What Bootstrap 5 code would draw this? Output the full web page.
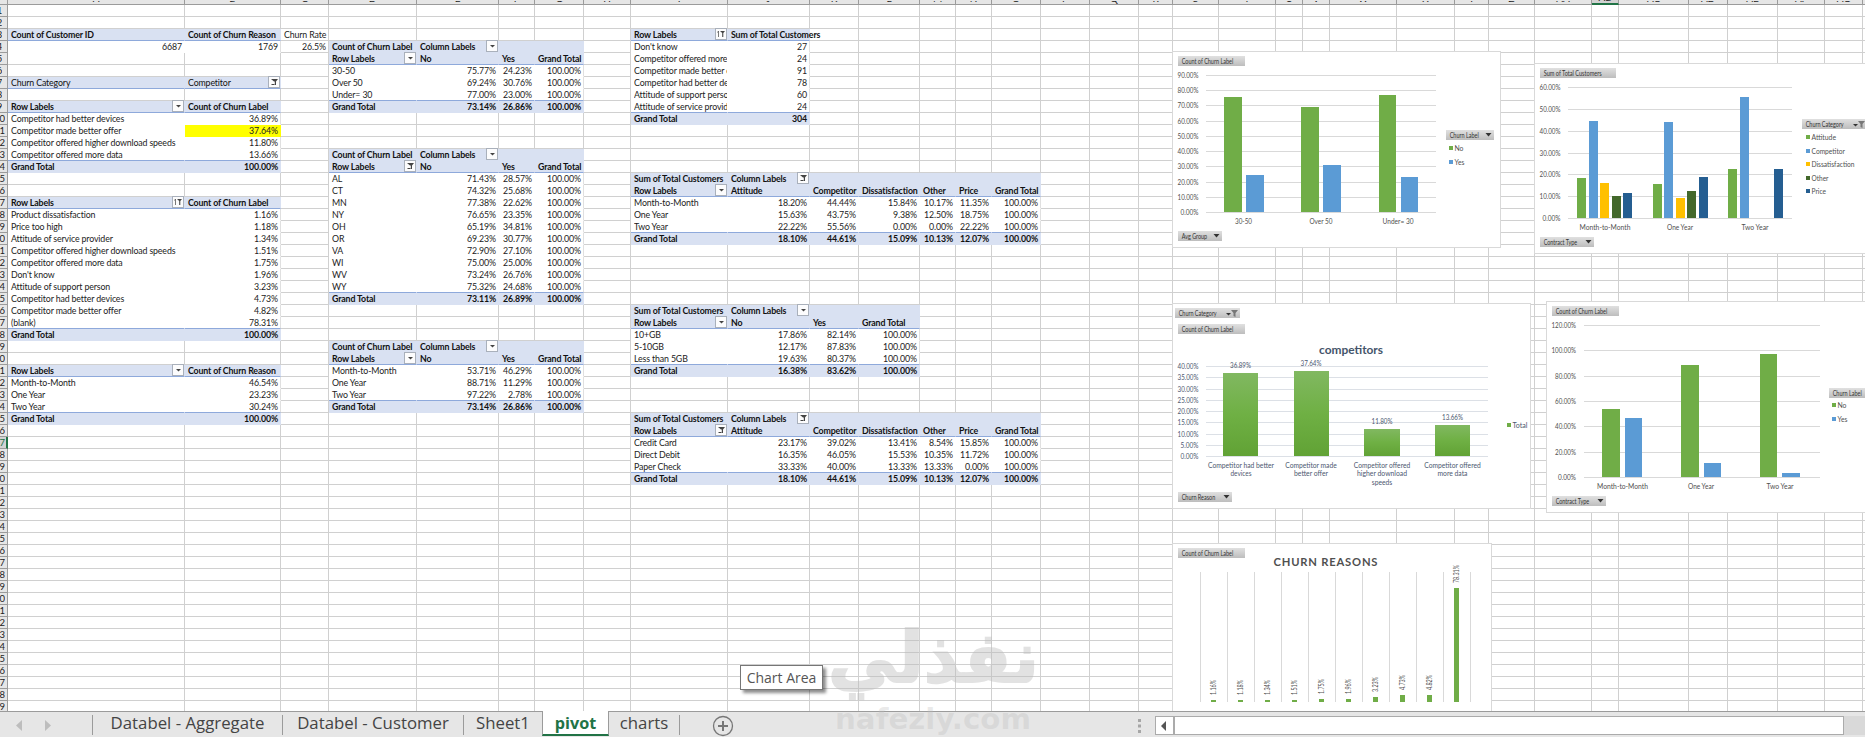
<!DOCTYPE html>
<html lang="en">
<head>
    <meta charset="UTF-8">
    <meta name="viewport" content="width=device-width, initial-scale=1.0">
    <title>Churn workbook</title>
    <link rel="stylesheet" href="https://cdn.jsdelivr.net/npm/bootstrap@5.3.0/dist/css/bootstrap.min.css">
    <style>
        body { width: 1865px; height: 737px; font-family: Lato, "Liberation Sans", sans-serif; color: #222; }
        .sheet-area { height: 711px; }

        .grid { width: 1906px; table-layout: fixed; border-collapse: separate; border-spacing: 0; font-size: 8.8px; line-height: 11px; letter-spacing: -.14px; }
        .grid td, .grid th { height: 12px; padding: 0 2px 0 3px; border-right: 1px solid #d0d0d0; border-bottom: 1px solid #d0d0d0; white-space: nowrap; position: relative; font-weight: 400; }
        .grid td > span, .grid td.clip > div { position: relative; top: -.4px; }
        .grid .col-head th { height: 4px; padding: 0; background: #e6e6e6; border-color: #9b9b9b; }
        .col-head div { height: 3px; line-height: 3px; font-size: 10px; overflow: hidden; text-align: center; }
        .col-head div span { position: relative; top: -4px; }
        .grid .col-head .active { background: #d2d2d2; border-bottom: 2px solid #217346; }
        .grid .row-head { padding: 0; background: #e6e6e6; border-color: #9b9b9b; font-size: 9.5px; }
        .row-head div { width: 5px; height: 11px; overflow: hidden; display: flex; justify-content: flex-end; }
        .row-head.single div { width: 2px; }
        .grid .row-head.active { color: #217346; border-right: 2px solid #217346; background: #d2d2d2; }

        .grid .blue { background: #d9e1f2; border-color: #d9e1f2; color: #111; }
        .grid .bold { font-weight: 700; }
        .grid .plain { background: #fff; border-color: #fff; }
        .grid .edge { border-right-color: #e0e0e0; }
        .grid .rule { border-bottom-color: #8ea9db; }
        .grid .hot { background: #ff0; border-color: #ff0; }
        .grid .num { text-align: right; letter-spacing: -.1px; }
        .grid .clip { padding-right: 0; }
        .grid .clip > div { overflow: hidden; height: 11px; }
        .drop { position: absolute; right: 0; top: 0; width: 12px; height: 12px; margin-top: -1px; }

        .chart-layer { position: absolute; left: 0; top: 0; }
        .chart-layer text { font-size: 7.2px; fill: #505050; }
        .chart-layer .chart3 text { fill: #4c5870; }
        .chart-layer text.btn-text { fill: #333; }

        .tip { position: absolute; left: 740px; top: 665px; width: 83px; height: 25px; border: 1px solid #767676; background: #fff; color: #555; font: 14px/24px "Open Sans", sans-serif; box-shadow: 3px 3px 3px rgba(0,0,0,.45); text-align: center; }
        .mark-layer { position: absolute; left: 820px; top: 605px; pointer-events: none; }

        .tab-bar { height: 26px; background: #e6e6e6; border-top: 1px solid #9b9b9b; font: 16.8px/17px "Open Sans", sans-serif; color: #444; }
        .sheet-tab { height: 20px; margin-top: 3px; border-right: 1px solid #9b9b9b; text-align: center; line-height: 16px; white-space: nowrap; }
        .sheet-tab.current { height: 25px; margin-top: -1px; padding-top: 4px; background: #fff; color: #217346; font-weight: 700; font-size: 16.2px; border-right: 1px solid #9b9b9b; border-left: 1px solid #9b9b9b; border-bottom: 2px solid #217346; }
        .scroll-btn, .scroll-thumb { height: 19px; background: #fff; border: 1px solid #ababab; }
        .scroll-track { height: 19px; background: #d9d9d9; }
    </style>
</head>
<body class="overflow-hidden bg-white">
    <div class="d-flex flex-column">
        <main class="sheet-area position-relative overflow-hidden">
            <table class="grid" id="grid"></table>
            <svg class="chart-layer" id="charts" width="1865" height="711"></svg>
        </main>

        <footer class="tab-bar d-flex">
            <svg width="92" height="25">
                <path d="M22 8v11l-6-5.500zM45 8v11l6-5.500z" fill="#bdbdbd"/>
            </svg>
            <div class="sheet-tab" style="width:1px"></div>
            <div class="sheet-tab" style="width:190px">Databel - Aggregate</div>
            <div class="sheet-tab" style="width:181px">Databel - Customer</div>
            <div class="sheet-tab border-0" style="width:78px">Sheet1</div>
            <div class="sheet-tab current" style="width:67px">pivot</div>
            <div class="sheet-tab" style="width:71px">charts</div>
            <svg width="462" height="25">
                <circle cx="43" cy="14" r="9.500" fill="none" stroke="#777" stroke-width="1.300"/>
                <path d="M38 14h10M43 9v10" stroke="#777" stroke-width="2"/>
                <path d="M458 7h3v3h-3zM458 12.500h3v3h-3zM458 18h3v3h-3z" fill="#a6a6a6"/>
            </svg>
            <div class="flex-grow-1 d-flex pt-1" style="padding-left:13px">
                <div class="scroll-btn" style="width:19px"><svg width="17" height="17" class="d-block"><path d="M10 4v10l-5-5z" fill="#555"/></svg></div>
                <div class="scroll-thumb" style="width:670px"></div>
                <div class="scroll-track flex-grow-1"></div>
            </div>
        </footer>
    </div>

    <div class="tip">Chart Area</div>
    <svg class="mark-layer" width="230" height="132" fill="#bcbcbc">
        <g opacity=".42">
            <text x="219" y="77" direction="rtl" font-family="DejaVu Sans" font-weight="700" font-size="71" textLength="211" lengthAdjust="spacingAndGlyphs" stroke="#bcbcbc" stroke-width="2">نفذلي</text>
        </g>
        <text x="15" y="124" font-family="DejaVu Sans" font-weight="700" font-size="29" textLength="196" lengthAdjust="spacingAndGlyphs" fill-opacity=".33">nafezly.com</text>
    </svg>

    <script src="https://cdn.jsdelivr.net/npm/bootstrap@5.3.0/dist/js/bootstrap.bundle.min.js"></script>
    <script>
        const edges = [7, 184, 280, 328, 416, 498, 534, 583, 630, 727, 809, 858, 919, 955, 991, 1040, 1089, 1138, 1172, 1218, 1275, 1302, 1329, 1396, 1454, 1488, 1534, 1591, 1618, 1688, 1727, 1777, 1824, 1862, 1905];
        const rowCount = 59;
        const cells = {};

        const reasonRows = [['Product dissatisfaction', '1.16%'], ['Price too high', '1.18%'], ['Attitude of service provider', '1.34%'], ['Competitor offered higher download speeds', '1.51%'], ['Competitor offered more data', '1.75%'], ["Don't know", '1.96%'], ['Attitude of support person', '3.23%'], ['Competitor had better devices', '4.73%'], ['Competitor made better offer', '4.82%'], ['(blank)', '78.31%']];
        const h = '100.00%';
        const churnHead = drop => [['Count of Churn Label', 'Column Labels|down', '', ''], ['Row Labels|' + drop, 'No', 'Yes', 'Grand Total']];
        const typeHead = drop => [['Sum of Total Customers', 'Column Labels|filter', '', '', '', '', ''], ['Row Labels|' + drop, 'Attitude', 'Competitor', 'Dissatisfaction', 'Other', 'Price', 'Grand Total']];

        const pivots = [
            { col: 0, row: 3, head: [['Count of Customer ID', 'Count of Churn Reason']], body: [['#6687', '1769']] },
            { col: 0, row: 9, head: [['Row Labels|down', 'Count of Churn Label']], body: [['Competitor had better devices', '36.89%'], ['Competitor made better offer', '37.64%'], ['Competitor offered higher download speeds', '11.80%'], ['Competitor offered more data', '13.66%']], total: ['Grand Total', h] },
            { col: 0, row: 17, head: [['Row Labels|sort', 'Count of Churn Label']], body: reasonRows, total: ['Grand Total', h] },
            { col: 0, row: 31, head: [['Row Labels|down', 'Count of Churn Reason']], body: [['Month-to-Month', '46.54%'], ['One Year', '23.23%'], ['Two Year', '30.24%']], total: ['Grand Total', h] },
            { col: 3, row: 4, head: churnHead('down'), body: [['30-50', '75.77%', '24.23%', h], ['Over 50', '69.24%', '30.76%', h], ['Under= 30', '77.00%', '23.00%', h]], total: ['Grand Total', '73.14%', '26.86%', h] },
            { col: 3, row: 13, head: churnHead('filter'), body: [['AL', '71.43%', '28.57%', h], ['CT', '74.32%', '25.68%', h], ['MN', '77.38%', '22.62%', h], ['NY', '76.65%', '23.35%', h], ['OH', '65.19%', '34.81%', h], ['OR', '69.23%', '30.77%', h], ['VA', '72.90%', '27.10%', h], ['WI', '75.00%', '25.00%', h], ['WV', '73.24%', '26.76%', h], ['WY', '75.32%', '24.68%', h]], total: ['Grand Total', '73.11%', '26.89%', h] },
            { col: 3, row: 29, head: churnHead('down'), body: [['Month-to-Month', '53.71%', '46.29%', h], ['One Year', '88.71%', '11.29%', h], ['Two Year', '97.22%', '2.78%', h]], total: ['Grand Total', '73.14%', '26.86%', h] },
            { col: 8, row: 3, head: [['Row Labels|sort', 'Sum of Total Customers']], body: [["Don't know", '27'], ['Competitor offered more', '24'], ['Competitor made better offer', '91'], ['Competitor had better devices', '78'], ['Attitude of support person', '60'], ['Attitude of service provider', '24']], total: ['Grand Total', '304'] },
            { col: 8, row: 15, head: typeHead('down'), body: [['Month-to-Month', '18.20%', '44.44%', '15.84%', '10.17%', '11.35%', h], ['One Year', '15.63%', '43.75%', '9.38%', '12.50%', '18.75%', h], ['Two Year', '22.22%', '55.56%', '0.00%', '0.00%', '22.22%', h]], total: ['Grand Total', '18.10%', '44.61%', '15.09%', '10.13%', '12.07%', h] },
            { col: 8, row: 26, head: [['Sum of Total Customers', 'Column Labels|down', '', ''], ['Row Labels|down', 'No', 'Yes', 'Grand Total']], body: [['10+GB', '17.86%', '82.14%', h], ['5-10GB', '12.17%', '87.83%', h], ['Less than 5GB', '19.63%', '80.37%', h]], total: ['Grand Total', '16.38%', '83.62%', h] },
            { col: 8, row: 35, head: typeHead('filter'), body: [['Credit Card', '23.17%', '39.02%', '13.41%', '8.54%', '15.85%', h], ['Direct Debit', '16.35%', '46.05%', '15.53%', '10.35%', '11.72%', h], ['Paper Check', '33.33%', '40.00%', '13.33%', '13.33%', '0.00%', h]], total: ['Grand Total', '18.10%', '44.61%', '15.09%', '10.13%', '12.07%', h] }
        ];

        function put(row, col, text, cls) {
            cells[row + ':' + col] = { text, cls };
        }

        pivots.forEach(p => {
            let r = p.row;
            p.head.forEach((line, i) => {
                line.forEach((t, c) => put(r, p.col + c, t, 'blue bold' + (i === p.head.length - 1 ? ' rule' : '')));
                r++;
            });
            p.body.forEach((line, i) => {
                line.forEach((t, c) => {
                    let cls = 'plain';
                    if (c > 0 || t[0] === '#') cls += ' num';
                    if (c === line.length - 1) cls += ' edge';
                    if (p.total && i === p.body.length - 1) cls += ' rule';
                    if (c === 0 && p.col === 8) cls += ' clip';
                    put(r, p.col + c, t.replace('#', ''), cls);
                });
                r++;
            });
            if (p.total) p.total.forEach((t, c) => put(r, p.col + c, t, 'blue bold' + (c ? ' num' : '')));
        });
        put(3, 2, 'Churn Rate', '');
        put(4, 2, '26.5%', 'num');
        put(7, 0, 'Churn Category', 'blue rule');
        put(7, 1, 'Competitor|filter', 'blue rule');
        cells['11:1'].cls += ' hot';

        const glyphs = {
            down: '<path d="M4 5h5L6.500 7.500z" fill="#444"/>',
            filter: '<path d="M3 3h7L8 5.500V9H6.800V5.500H6z" fill="#444"/><path d="M3.500 8.500h3" stroke="#444"/>',
            sort: '<path d="M3.500 3v6M2.500 4.500l1-1.500" stroke="#555" stroke-width=".8" fill="none"/><path d="M5 3h5L8.300 5V9H7.200V5z" fill="#444"/>'
        };
        const dropSvg = kind => `<svg class="drop" viewBox="0 0 12 12"><rect x=".5" y=".5" width="11" height="11" fill="#fcfcfd" stroke="#a9b0bb"/>${glyphs[kind]}</svg>`;

        function colName(i) {
            return i < 26 ? String.fromCharCode(65 + i) : 'A' + String.fromCharCode(39 + i);
        }

        let html = '<colgroup><col style="width:8px">';
        for (let i = 1; i < edges.length; i++) html += `<col style="width:${edges[i] - edges[i - 1]}px">`;
        html += '</colgroup><tr class="col-head"><th></th>';
        for (let c = 0; c < edges.length - 1; c++) html += `<th class="${c === 27 ? 'active' : ''}"><div><span>${colName(c)}</span></div></th>`;
        html += '</tr>';
        for (let r = 1; r <= rowCount; r++) {
            html += `<tr><th class="row-head ${r < 10 ? 'single' : ''} ${r === 37 ? 'active' : ''}"><div>${r}</div></th>`;
            for (let c = 0; c < edges.length - 1; c++) {
                const cell = cells[r + ':' + c];
                if (!cell) { html += '<td></td>'; continue; }
                const [text, drop] = cell.text.split('|');
                const tag = cell.cls.includes('clip') ? 'div' : 'span';
                html += `<td class="${cell.cls}"><${tag}>${text}</${tag}>${drop ? dropSvg(drop) : ''}</td>`;
            }
            html += '</tr>';
        }
        document.getElementById('grid').innerHTML = html;

        // Chart helpers, all in sheet coordinates
        const green = '#70ad47', blue = '#5b9bd5';
        const rect = (x, y, w, hh, fill, more = '') => `<rect x="${x}" y="${y}" width="${w}" height="${hh}" fill="${fill}" ${more}/>`;
        const label = (x, y, t, len, anchor = 'start', more = '') => `<text x="${x}" y="${y}" text-anchor="${anchor}" ${len ? `textLength="${len}" lengthAdjust="spacingAndGlyphs"` : ''} ${more}>${t}</text>`;
        const frame = (x, y, w, hh) => rect(x + .5, y + .5, w, hh, '#fff', 'stroke="#d9d9d9"');
        function button(x, y, w, t, len, icon) {
            let s = rect(x, y, w, 10, 'url(#btnFill)') + label(x + 3.7, y + 7.7, t, len, 'start', 'class="btn-text"');
            if (icon === 'down') s += `<path d="M${x + w - 8.5} ${y + 3}h6l-3 3.500z" fill="#333"/>`;
            if (icon === 'filter') s += `<path d="M${x + w - 14} ${y + 5}h5l-2.500 2.500z" fill="#333"/><path d="M${x + w - 9} ${y + 2}h7l-2.500 3v4l-2-1v-3z" fill="#777"/>`;
            return s;
        }
        function axis(x1, x2, top, base, max, step, labelX, color = '#d9d9d9') {
            let s = '';
            for (let v = 0; v <= max; v += step) {
                const y = Math.round(base - (base - top) * v / max);
                s += rect(x1, y, x2 - x1, 1, color) + label(labelX, y + 3.2, v.toFixed(2) + '%', v >= 100 ? 24.5 : v >= 10 ? 21 : 18, 'end');
            }
            return s;
        }
        function bars(list, base, top, max) {
            return list.map(([x, w, v, fill]) => {
                const hh = Math.round((base - top) * v / max);
                return rect(x, base - hh, w, hh, fill);
            }).join('');
        }
        const key = (x, y, fill, t, len) => rect(x, y, 4, 4, fill) + label(x + 5.5, y + 4.5, t, len);

        let out = `<defs>
            <linearGradient id="btnFill" x2="0" y2="1"><stop stop-color="#e0e0e0"/><stop offset="1" stop-color="#bdbdbd"/></linearGradient>
            <linearGradient id="barFill" x2="0" y2="1"><stop stop-color="#81b861"/><stop offset=".5" stop-color="#6fb044"/><stop offset="1" stop-color="#61a235"/></linearGradient>
        </defs>`;

        // Age groups
        out += frame(1172, 51, 328, 196) + button(1178, 56, 67, 'Count of Churn Label', 51.5)
            + axis(1206, 1436, 75, 212, 90, 10, 1198.5)
            + bars([[1224, 18, 75.77, green], [1246, 18, 24.23, blue], [1301, 18, 69.24, green], [1323, 18, 30.76, blue], [1379, 17, 77, green], [1401, 17, 23, blue]], 212, 75, 90)
            + label(1243.5, 224, '30-50', 17, 'middle') + label(1321, 224, 'Over 50', 23, 'middle') + label(1398, 224, 'Under= 30', 31, 'middle')
            + button(1178, 231, 44, 'Avg Group', 25.5, 'down') + button(1446, 130, 48, 'Churn Label', 29, 'down')
            + key(1449, 146, green, 'No', 9) + key(1449, 160, blue, 'Yes', 10);

        // Churn category by contract
        const five = [green, blue, '#ffc000', '#43682b', '#255e91'];
        const contract = [[1577, [18.2, 44.44, 15.84, 10.17, 11.35]], [1652.5, [15.63, 43.75, 9.38, 12.5, 18.75]], [1728, [22.22, 55.56, 0, 0, 22.22]]];
        out += frame(1534, 63, 340, 190) + button(1540, 68, 76, 'Sum of Total Customers', 58)
            + axis(1568, 1792, 87, 218, 60, 10, 1560.5)
            + bars(contract.flatMap(([x, vals]) => vals.map((v, i) => [Math.round(x + i * 11.6), 9, v, five[i]])), 218, 87, 60)
            + label(1605, 230, 'Month-to-Month', 51, 'middle') + label(1680, 230, 'One Year', 26, 'middle') + label(1755, 230, 'Two Year', 27, 'middle')
            + button(1540, 237, 54, 'Contract Type', 33.5, 'down') + button(1802, 119, 65, 'Churn Category', 38, 'filter');
        ['Attitude', 'Competitor', 'Dissatisfaction', 'Other', 'Price'].forEach((t, i) => {
            out += key(1806, Math.round(135 + i * 13.5), five[i], t, [24.5, 33.5, 43, 17, 14.5][i]);
        });

        // Competitors
        const comp = [[1223, 35, 36.89, 'url(#barFill)'], [1294, 35, 37.64, 'url(#barFill)'], [1364, 36, 11.8, 'url(#barFill)'], [1435, 35, 13.66, 'url(#barFill)']];
        out += `<g class="chart3">` + frame(1172, 303, 358, 205) + button(1175, 308, 65, 'Churn Category', 38, 'filter') + button(1178, 324, 67, 'Count of Churn Label', 51.5)
            + label(1351, 353.5, 'competitors', 64, 'middle', 'style="font-size:12px;font-weight:700;fill:#44546a"')
            + axis(1206, 1488, 366, 456, 40, 5, 1198.5, '#dce0e6') + bars(comp, 456, 366, 40)
            + label(1240.5, 368, '36.89%', 21, 'middle') + label(1311, 366, '37.64%', 21, 'middle') + label(1382, 424, '11.80%', 21, 'middle') + label(1452.5, 420, '13.66%', 21, 'middle')
            + label(1241, 468, 'Competitor had better', 66, 'middle') + label(1241, 476, 'devices', 21, 'middle')
            + label(1311, 468, 'Competitor made', 51.5, 'middle') + label(1311, 476, 'better offer', 34, 'middle')
            + label(1382, 468, 'Competitor offered', 56.5, 'middle') + label(1382, 476, 'higher download', 50, 'middle') + label(1382, 485, 'speeds', 20.5, 'middle')
            + label(1452.5, 468, 'Competitor offered', 56.5, 'middle') + label(1452.5, 476, 'more data', 30, 'middle')
            + button(1178, 492, 54, 'Churn Reason', 33.5, 'down') + key(1507, 423, green, 'Total', 15) + '</g>';

        // Churn by contract
        out += frame(1546, 301, 340, 211) + button(1552, 306, 67, 'Count of Churn Label', 51.5)
            + axis(1584, 1820, 325, 477, 120, 20, 1576)
            + bars([[1602, 18, 53.71, green], [1625, 17, 46.29, blue], [1681, 18, 88.71, green], [1704, 17, 11.29, blue], [1760, 17, 97.22, green], [1782, 18, 2.78, blue]], 477, 325, 120)
            + label(1622.5, 489, 'Month-to-Month', 51, 'middle') + label(1701, 489, 'One Year', 26, 'middle') + label(1780, 489, 'Two Year', 27, 'middle')
            + button(1552, 496, 54, 'Contract Type', 33.5, 'down') + button(1829, 388, 48, 'Churn Label', 29)
            + key(1832, 403, green, 'No', 9) + key(1832, 417, blue, 'Yes', 10);

        // Churn reasons
        out += frame(1172, 543, 319, 180) + button(1178, 548, 67, 'Count of Churn Label', 51.5)
            + '<text x="1273.5" y="566" style="font-size:11.2px;font-weight:700" textLength="104" lengthAdjust="spacing">CHURN REASONS</text>';
        for (let i = 0; i <= 10; i++) out += rect(1200 + i * 27, 572, 1, 130, '#d9d9d9');
        reasonRows.forEach(([, t], i) => {
            const v = parseFloat(t), hh = Math.max(2, Math.round(v * 1.456)), x = 1211 + i * 27;
            out += rect(x, 702 - hh, 5, hh, green) + `<text transform="translate(${x + 5} ${697 - hh}) rotate(-90)" textLength="${v > 10 ? 18 : 15}" lengthAdjust="spacingAndGlyphs">${t}</text>`;
        });
        document.getElementById('charts').innerHTML = out;
    </script>
</body>
</html>
